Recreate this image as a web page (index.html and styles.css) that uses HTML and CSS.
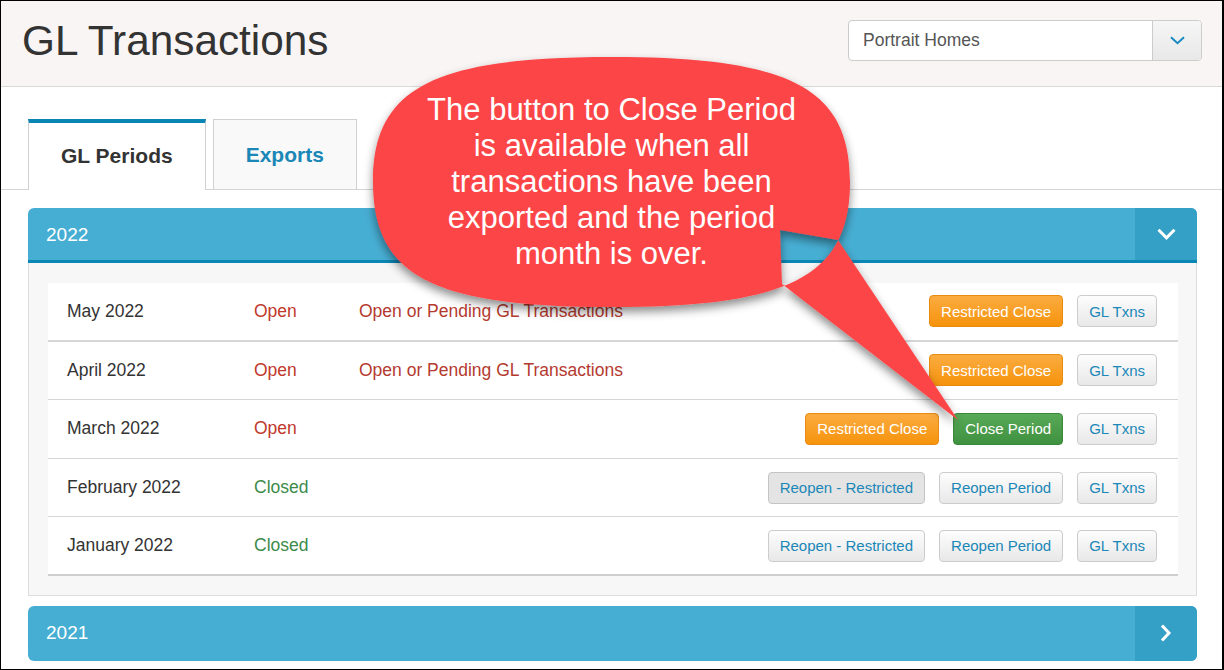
FILE: index.html
```html
<!DOCTYPE html>
<html lang="en">
<head>
    <meta charset="UTF-8">
    <meta name="viewport" content="width=device-width, initial-scale=1.0">
    <title>GL Transactions</title>
    <link rel="stylesheet" href="styles.css">
</head>
<body>
    <div class="frame">
        <header class="page-head">
            <h1>GL Transactions</h1>
            <div class="picker">
                <span class="picker-value">Portrait Homes</span>
                <span class="picker-btn">
                    <svg width="15" height="9" viewBox="0 0 15 9"><path d="M1 1.2l6.5 6 6.5-6" fill="none" stroke="#1a8ac0" stroke-width="2"/></svg>
                </span>
            </div>
        </header>

        <nav class="tabs">
            <a class="tab active">GL Periods</a>
            <a class="tab">Exports</a>
        </nav>

        <main class="content">
            <section class="year open">
                <div class="year-head">
                    <span class="year-title">2022</span>
                    <span class="toggle">
                        <svg width="19" height="12" viewBox="0 0 19 12"><path d="M1.5 1.8l8 8 8-8" fill="none" stroke="#fff" stroke-width="3"/></svg>
                    </span>
                </div>
                <div class="year-body">
                    <div class="periods">
                        <div class="period">
                            <span class="month">May 2022</span>
                            <span class="status open">Open</span>
                            <span class="note">Open or Pending GL Transactions</span>
                            <span class="actions">
                                <button class="btn warn">Restricted Close</button>
                                <button class="btn">GL Txns</button>
                            </span>
                        </div>
                        <div class="period">
                            <span class="month">April 2022</span>
                            <span class="status open">Open</span>
                            <span class="note">Open or Pending GL Transactions</span>
                            <span class="actions">
                                <button class="btn warn">Restricted Close</button>
                                <button class="btn">GL Txns</button>
                            </span>
                        </div>
                        <div class="period">
                            <span class="month">March 2022</span>
                            <span class="status open">Open</span>
                            <span class="note"></span>
                            <span class="actions">
                                <button class="btn warn">Restricted Close</button>
                                <button class="btn ok">Close Period</button>
                                <button class="btn">GL Txns</button>
                            </span>
                        </div>
                        <div class="period">
                            <span class="month">February 2022</span>
                            <span class="status closed">Closed</span>
                            <span class="note"></span>
                            <span class="actions">
                                <button class="btn pressed">Reopen - Restricted</button>
                                <button class="btn">Reopen Period</button>
                                <button class="btn">GL Txns</button>
                            </span>
                        </div>
                        <div class="period">
                            <span class="month">January 2022</span>
                            <span class="status closed">Closed</span>
                            <span class="note"></span>
                            <span class="actions">
                                <button class="btn">Reopen - Restricted</button>
                                <button class="btn">Reopen Period</button>
                                <button class="btn">GL Txns</button>
                            </span>
                        </div>
                    </div>
                </div>
            </section>

            <section class="year">
                <div class="year-head">
                    <span class="year-title">2021</span>
                    <span class="toggle">
                        <svg width="12" height="18" viewBox="0 0 12 18"><path d="M2 1.5l7 7.5-7 7.5" fill="none" stroke="#fff" stroke-width="3"/></svg>
                    </span>
                </div>
            </section>
        </main>
    </div>

    <!-- annotation bubble drawn over the page -->
    <div class="callout">
        <svg width="1224" height="670" viewBox="0 0 1224 670">
            <defs>
                <filter id="shade" x="-10%" y="-10%" width="130%" height="140%">
                    <feDropShadow dx="0" dy="5" stdDeviation="5" flood-color="#000" flood-opacity="0.45"/>
                </filter>
            </defs>
            <g fill="#fc4446" filter="url(#shade)">
                <path d="M373 182 C373 88.25 432.6 57 611.5 57 C790.4 57 850 88.25 850 182 C850 275.75 790.4 307 611.5 307 C432.6 307 373 275.75 373 182 Z M782 284 L958 420 L838 240 L780 230 Z"/>
            </g>
        </svg>
        <div class="callout-text">The button to Close Period<br>is available when all<br>transactions have been<br>exported and the period<br>month is over.</div>
    </div>
</body>
</html>
```

FILE: styles.css
```css
* {
    box-sizing: border-box;
}
body {
    margin: 0;
    font-family: "Liberation Sans", Arial, sans-serif;
    color: #333;
    background: #fff;
}
.frame {
    width: 1224px;
    height: 670px;
    border-style: solid;
    border-color: #000;
    border-width: 1px 2px 1px 1px;
    overflow: hidden;
}

/* header */
.page-head {
    height: 86px;
    display: flex;
    align-items: center;
    justify-content: space-between;
    padding: 2px 20px 8px 21px;
    background: #f8f5f4;
    border-bottom: 1px solid #d9d9d9;
}
.page-head h1 {
    margin: 0;
    font-size: 42.3px;
    line-height: 42px;
    font-weight: normal;
    color: #333;
}
.picker {
    width: 354px;
    height: 41px;
    display: flex;
    background: #fff;
    border: 1px solid #ccc;
    border-radius: 4px;
    overflow: hidden;
}
.picker-value {
    flex: 1;
    display: flex;
    align-items: center;
    padding-left: 14px;
    font-size: 17.5px;
    color: #555;
}
.picker-btn {
    width: 49px;
    display: flex;
    align-items: center;
    justify-content: center;
    border-left: 1px solid #ccc;
    background: linear-gradient(#f6f6f6, #e8e8e8);
}

/* tabs */
.tabs {
    display: flex;
    gap: 7px;
    padding: 32px 0 0 27px;
    border-bottom: 1px solid #d4d4d4;
}
.tab {
    height: 70px;
    display: flex;
    align-items: center;
    padding: 0 32px;
    margin-bottom: -1px;
    font-size: 21px;
    font-weight: bold;
    color: #1a87b7;
    background: #f9f9f9;
    border: 1px solid #d0d0d0;
    border-bottom: none;
}
.tab.active {
    height: 71px;
    color: #333;
    background: #fff;
    border-top: 4px solid #0a86b5;
    padding-bottom: 1px;
}

/* year panels */
.content {
    padding: 18px 25px 0 27px;
}
.year {
    margin-bottom: 10px;
}
.year-head {
    height: 55px;
    display: flex;
    align-items: stretch;
    background: #47aed3;
    border-radius: 6px;
    overflow: hidden;
    color: #fff;
}
.year.open .year-head {
    height: 55px;
    padding-top: 2px;
    border-radius: 6px 6px 0 0;
    border-bottom: 3px solid #0a87b5;
}
.year.open .toggle {
    margin-top: -2px;
}
.year-title {
    flex: 1;
    display: flex;
    align-items: center;
    padding-left: 18px;
    font-size: 19px;
}
.toggle {
    width: 62px;
    display: flex;
    align-items: center;
    justify-content: center;
    background: #35a0c6;
}
.year-body {
    padding: 20px 18px 19px 19px;
    background: #f7f7f7;
    border: 1px solid #ddd;
    border-top: none;
}
.periods {
    background: #fff;
}
.period {
    height: 58.6px;
    display: grid;
    grid-template-columns: 187px 105px 1fr auto;
    align-items: center;
    padding: 0 21px 0 19px;
    font-size: 17.5px;
    border-bottom: 1px solid #d6d6d6;
}
.period:first-child {
    border-bottom-width: 2px;
}
.period:last-child {
    border-bottom: 2px solid #cfcfcf;
}
.status.open {
    color: #c0392b;
}
.note {
    color: #b43a2f;
}
.status.closed {
    color: #3d8b4b;
}
.actions {
    display: flex;
    gap: 14px;
}

/* buttons */
.btn {
    height: 32px;
    padding: 0 11px;
    font-family: "Liberation Sans", Arial, sans-serif;
    font-size: 15px;
    color: #1a87b7;
    background: linear-gradient(#fdfdfd, #e8e8e8);
    border: 1px solid #ccc;
    border-radius: 4px;
    cursor: pointer;
}
.btn.pressed {
    background: #e4e4e4;
    border-color: #c4c4c4;
}
.btn.warn {
    color: #fff;
    background: linear-gradient(#fbac41, #f6930c);
    border-color: #e78c10;
}
.btn.ok {
    color: #fff;
    background: linear-gradient(#58a958, #3e913e);
    border-color: #3a883a;
}

/* callout */
.callout {
    position: absolute;
    top: 0;
    left: 0;
    width: 1224px;
    height: 670px;
    pointer-events: none;
}
.callout svg {
    display: block;
}
.callout-text {
    position: absolute;
    left: 373px;
    top: 92px;
    width: 477px;
    text-align: center;
    font-size: 31px;
    line-height: 36px;
    color: #fff;
}
```
